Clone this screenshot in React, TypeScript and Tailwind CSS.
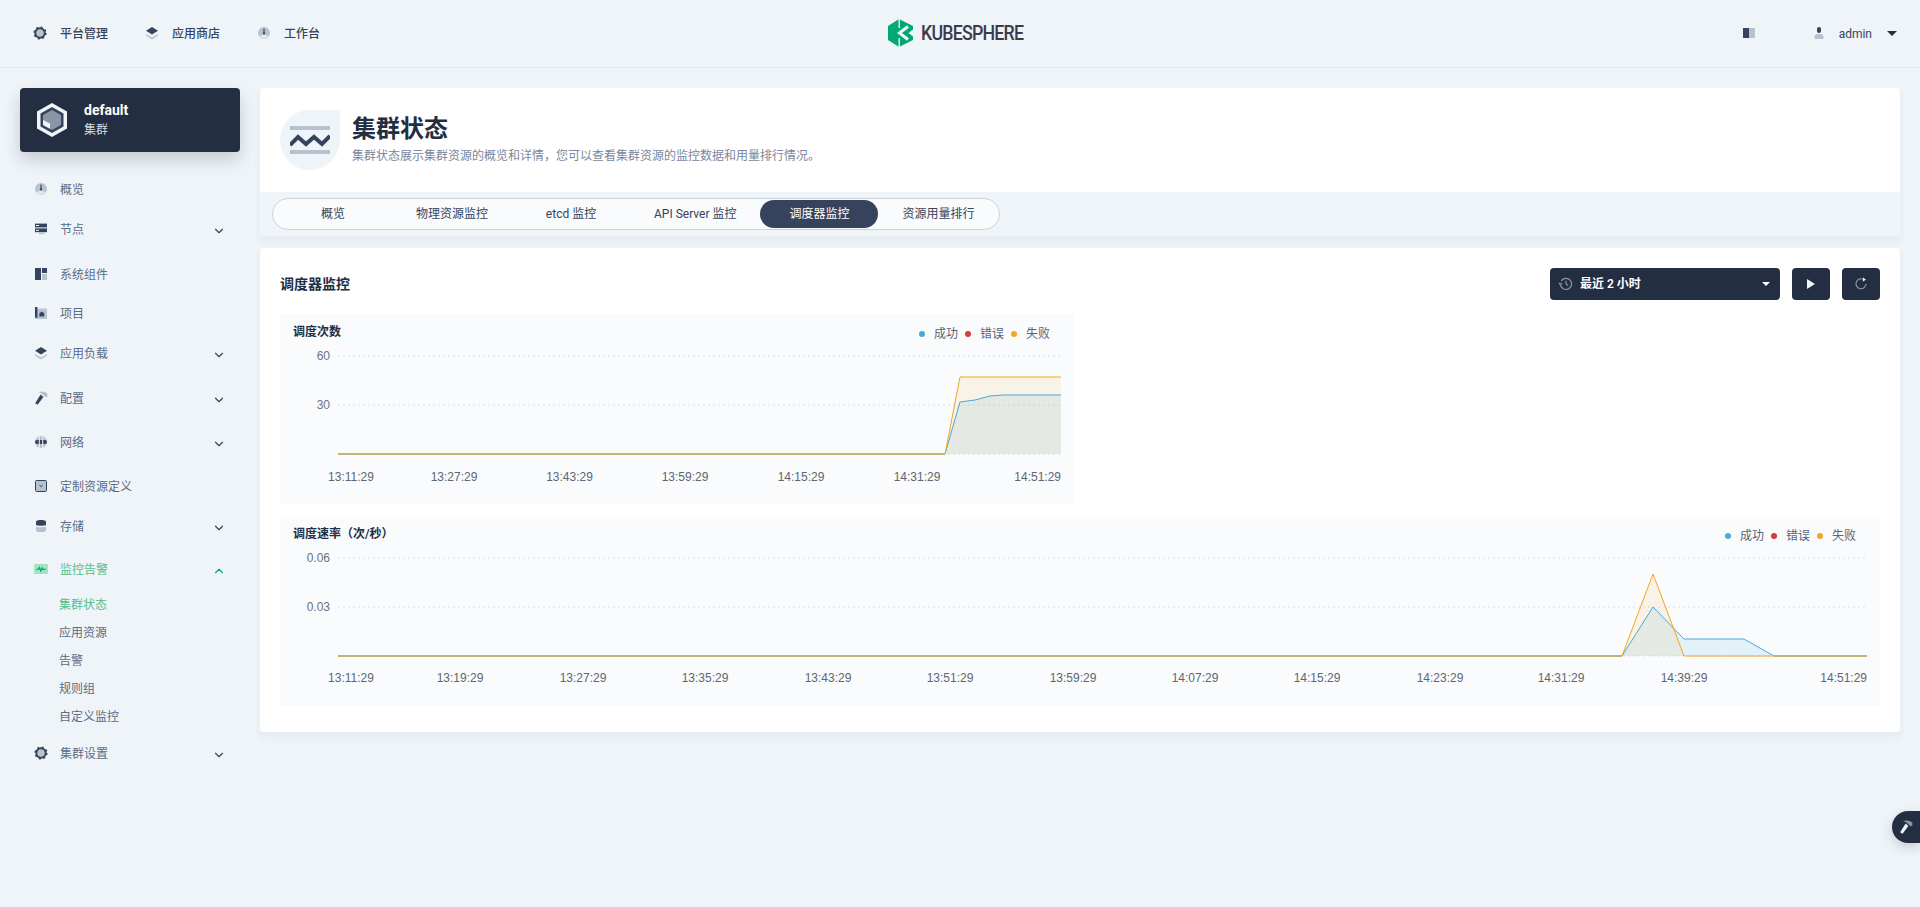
import { ChevronDown, ChevronUp } from "lucide-react";

const DARK = "#36435c";
const LIGHT = "#b6c2cd";

const GearIcon = () => (
  <svg width="16" height="16" viewBox="0 0 16 16" fill="none">
    <circle cx="8" cy="8" r="4.6" stroke={DARK} strokeWidth="2.2" />
    <circle cx="8" cy="8" r="5.8" stroke={DARK} strokeWidth="1.6" strokeDasharray="2 2.55" />
    <circle cx="8" cy="8" r="3.4" fill={LIGHT} />
  </svg>
);

const LayersIcon = () => (
  <svg width="16" height="16" viewBox="0 0 16 16">
    <polygon points="2,9 8,12.5 14,9 14,10.5 8,14.5 2,10.5" fill={LIGHT} />
    <polygon points="8,2 14,5.8 8,9.6 2,5.8" fill={DARK} />
  </svg>
);

const DialIcon = () => (
  <svg width="16" height="16" viewBox="0 0 16 16">
    <circle cx="8" cy="8" r="6" fill={LIGHT} />
    <path d="M3 11.2a6 6 0 0 0 10 0L8 9.5z" fill="#dfe5ec" />
    <rect x="7.4" y="3.6" width="1.2" height="4.6" fill={DARK} />
    <circle cx="8" cy="8.4" r="1.1" fill={DARK} />
  </svg>
);

const NodesIcon = () => (
  <svg width="16" height="16" viewBox="0 0 16 16">
    <rect x="2" y="2.6" width="12" height="3.8" fill={DARK} />
    <rect x="2" y="7.4" width="12" height="3.8" fill={DARK} />
    <rect x="6" y="11.6" width="5" height="1.6" fill={LIGHT} />
    <rect x="3" y="4" width="3" height="1" fill="#eff4f9" />
    <rect x="3" y="8.8" width="3" height="1" fill="#eff4f9" />
  </svg>
);

const ComponentsIcon = () => (
  <svg width="16" height="16" viewBox="0 0 16 16">
    <rect x="2" y="2" width="6" height="12" fill={DARK} />
    <rect x="9" y="2" width="5" height="5" fill={DARK} />
    <rect x="9" y="8" width="5" height="6" fill={LIGHT} />
  </svg>
);

const ProjectIcon = () => (
  <svg width="16" height="16" viewBox="0 0 16 16">
    <rect x="2" y="3.6" width="12" height="10.4" fill={LIGHT} />
    <rect x="2" y="2" width="2.4" height="10.6" fill={DARK} />
    <path d="M6.4 11.6V8.2L8.8 6.4l2.4 1.8v3.4z" fill={DARK} />
  </svg>
);

const HammerIcon = ({ head = LIGHT, handle = DARK }: { head?: string; handle?: string }) => (
  <svg width="16" height="16" viewBox="0 0 16 16">
    <path d="M5.4 2c3.2-1 6.6-.5 8.9 1.6v3.2l-1.8.5-3.2-3.1C8 3.3 6.8 2.6 5.4 2z" fill={head} />
    <path d="M7.6 4.6l2.8 2.4L4.6 14.8l-2.4-1.6z" fill={handle} />
  </svg>
);

const NetworkIcon = () => (
  <svg width="16" height="16" viewBox="0 0 16 16">
    <circle cx="8" cy="8" r="6" fill={LIGHT} />
    <rect x="5.8" y="2" width="1" height="12" fill="#eff4f9" />
    <rect x="9.2" y="2" width="1" height="12" fill="#eff4f9" />
    <rect x="2" y="6" width="12" height="4" rx="2" fill={DARK} />
    <rect x="5.8" y="6" width="1" height="4" fill="#eff4f9" />
    <rect x="9.2" y="6" width="1" height="4" fill="#eff4f9" />
  </svg>
);

const CrdIcon = () => (
  <svg width="16" height="16" viewBox="0 0 16 16" fill="none">
    <rect x="2.5" y="2.5" width="11" height="11" rx="1" fill={LIGHT} stroke={DARK} />
    <path d="M6.4 7.2L8 8.6l1.6-1.4" stroke={DARK} />
  </svg>
);

const DbIcon = () => (
  <svg width="16" height="16" viewBox="0 0 16 16">
    <path d="M3 8.4c1.6 1 8.4 1 10 0v4c0 2-10 2-10 0z" fill={LIGHT} />
    <path d="M3 3.4c0-2 10-2 10 0v3.6c-1.6 1-8.4 1-10 0z" fill={DARK} />
  </svg>
);

const MonitorIcon = () => (
  <svg width="16" height="16" viewBox="0 0 16 16" fill="none">
    <rect x="1" y="3" width="14" height="10" rx="1" fill="#a3e3c4" />
    <path d="M3.4 8.4h2l1-2 1.4 3.6 1.2-3 .8 1.4h3" stroke="#00aa72" strokeWidth="1.2" />
  </svg>
);

const BookIcon = () => (
  <svg width="16" height="16" viewBox="0 0 16 16">
    <rect x="2" y="3" width="6" height="10" fill={DARK} />
    <rect x="8" y="3" width="6" height="10" fill={LIGHT} />
  </svg>
);

const UserIcon = () => (
  <svg width="16" height="16" viewBox="0 0 16 16">
    <rect x="6" y="2" width="4" height="6" rx="2" fill={DARK} />
    <path d="M3.6 14v-2.4C3.6 10 5 9 6.6 9h2.8c1.6 0 3 1 3 2.6V14z" fill={LIGHT} />
  </svg>
);

const Logo = () => (
  <svg width="25" height="28" viewBox="0 0 25 28">
    <polygon points="11,0 25,7 25,21 11,28 0,21 0,7" fill="#00a971" />
    <polyline points="20,7.5 11.5,14 20,20.5" fill="none" stroke="#eff4f9" strokeWidth="3" />
    <polygon points="25,10.5 20.5,14 25,17.5" fill="#eff4f9" />
    <rect x="10.5" y="0" width="1.4" height="9" fill="#eff4f9" />
    <rect x="10.5" y="19" width="1.4" height="9" fill="#eff4f9" />
  </svg>
);

const navItems = [
  { icon: <GearIcon />, label: "平台管理" },
  { icon: <LayersIcon />, label: "应用商店" },
  { icon: <DialIcon />, label: "工作台" },
];

const menu = [
  { icon: <DialIcon />, label: "概览", mt: "mt-[21px]" },
  { icon: <NodesIcon />, label: "节点", mt: "mt-[8px]", arrow: true },
  { icon: <ComponentsIcon />, label: "系统组件", mt: "mt-[13px]" },
  { icon: <ProjectIcon />, label: "项目", mt: "mt-[7px]" },
  { icon: <LayersIcon />, label: "应用负载", mt: "mt-[8px]", arrow: true },
  { icon: <HammerIcon />, label: "配置", mt: "mt-[13px]", arrow: true },
  { icon: <NetworkIcon />, label: "网络", mt: "mt-[12px]", arrow: true },
  { icon: <CrdIcon />, label: "定制资源定义", mt: "mt-[12px]" },
  { icon: <DbIcon />, label: "存储", mt: "mt-[8px]", arrow: true },
];

const subMenu = ["集群状态", "应用资源", "告警", "规则组", "自定义监控"];

const tabs = ["概览", "物理资源监控", "etcd 监控", "API Server 监控", "调度器监控", "资源用量排行"];

function MenuRow({
  icon,
  label,
  mt,
  arrow,
  active,
}: {
  icon: React.ReactNode;
  label: string;
  mt: string;
  arrow?: boolean;
  active?: boolean;
}) {
  return (
    <div className={`h-8 flex items-center pl-[13px] pr-[14px] ${mt}`}>
      <span className="w-4 h-4 mr-[11px]">{icon}</span>
      <span className={`flex-1 mt-[2px] text-xs ${active ? "text-[#55bc8a]" : "text-[#5b6b85]"}`}>{label}</span>
      {arrow &&
        (active ? (
          <ChevronUp size={14} strokeWidth={2} className="mt-[3px] text-[#00aa72]" />
        ) : (
          <ChevronDown size={14} strokeWidth={2} className="mt-[3px] text-[#36435c]" />
        ))}
    </div>
  );
}

function Legend() {
  return (
    <div className="mt-[2px] flex items-center text-xs text-[#5a6478]">
      <span className="w-[6px] h-[6px] rounded-full bg-[#4aa9db] mr-[9px]" />
      <span className="mr-[7px]">成功</span>
      <span className="w-[6px] h-[6px] rounded-full bg-[#d13c3c] mr-[9px]" />
      <span className="mr-[7px]">错误</span>
      <span className="w-[6px] h-[6px] rounded-full bg-[#f5a623] mr-[9px]" />
      <span>失败</span>
    </div>
  );
}

type ChartProps = {
  title: string;
  className: string;
  width: number;
  height: number;
  yLabels: string[];
  ticks: { x: number; label: string; anchor?: "middle" | "end" }[];
  labelY: number;
  right: number;
  blue: string;
  orange: string;
  flats: [number, number][];
};

function Chart({ title, className, width, height, yLabels, ticks, labelY, right, blue, orange, flats }: ChartProps) {
  return (
    <div className={`rounded bg-[#f9fbfd] ${className}`}>
      <div className="h-[30px] pt-[10px] pl-[13px] pr-6 flex justify-between items-start">
        <div className="text-xs leading-4 font-semibold text-[#242e42]">{title}</div>
        <Legend />
      </div>
      <svg width={width} height={height} className="block">
        {[12, 61, 110].map((y) => (
          <line key={y} x1="58" x2={right} y1={y} y2={y} stroke="#e6e9ed" strokeWidth="1.3" strokeDasharray="2 3" />
        ))}
        {yLabels.map((l, i) => (
          <text
            key={l}
            x="50"
            y={12 + i * 49 + 4}
            textAnchor="end"
            fontSize="12"
            fontFamily="'Liberation Sans', sans-serif"
            fill="#6b7280"
          >
            {l}
          </text>
        ))}
        <path d={`${blue} L${right} 110 L58 110 Z`} fill="#4aa9db" fillOpacity="0.12" />
        <path d={`${orange} L${right} 110 L58 110 Z`} fill="#f5a623" fillOpacity="0.1" />
        <path d={blue} fill="none" stroke="#4aa9db" strokeWidth="1" />
        <path d={orange} fill="none" stroke="#f5a623" strokeWidth="1" />
        {flats.map(([a, b]) => (
          <line key={a} x1={a} x2={b} y1="110" y2="110" stroke="#c4b073" strokeWidth="1.6" />
        ))}
        {ticks.map((t) => (
          <text
            key={t.label}
            x={t.x}
            y={labelY}
            textAnchor={t.anchor || "middle"}
            fontSize="12"
            fontFamily="'Liberation Sans', sans-serif"
            fill="#5f6672"
          >
            {t.label}
          </text>
        ))}
      </svg>
    </div>
  );
}

const ticks1 = [
  { x: 71, label: "13:11:29" },
  { x: 174, label: "13:27:29" },
  { x: 289.5, label: "13:43:29" },
  { x: 405, label: "13:59:29" },
  { x: 521, label: "14:15:29" },
  { x: 637, label: "14:31:29" },
  { x: 781, label: "14:51:29", anchor: "end" as const },
];

const ticks2 = [
  { x: 71, label: "13:11:29" },
  { x: 180, label: "13:19:29" },
  { x: 303, label: "13:27:29" },
  { x: 425, label: "13:35:29" },
  { x: 548, label: "13:43:29" },
  { x: 670, label: "13:51:29" },
  { x: 793, label: "13:59:29" },
  { x: 915, label: "14:07:29" },
  { x: 1037, label: "14:15:29" },
  { x: 1160, label: "14:23:29" },
  { x: 1281, label: "14:31:29" },
  { x: 1404, label: "14:39:29" },
  { x: 1587, label: "14:51:29", anchor: "end" as const },
];

export default function App() {
  return (
    <div className="h-[907px] overflow-hidden bg-[#eff4f9] font-['Roboto','Noto_Sans_CJK_SC',sans-serif] text-[#242e42]">
      {/* 顶栏 */}
      <header className="h-[68px] border-b border-[#e3e9ef] flex items-center pl-8 pr-[23px] pb-[1px]">
        <nav className="flex-1 flex gap-9">
          {navItems.map((n) => (
            <div key={n.label} className="flex items-center gap-3 text-xs font-medium text-[#36435c]">
              <span className="w-4 h-4 -mt-[1px]">{n.icon}</span>
              <span className="mt-[1px]">{n.label}</span>
            </div>
          ))}
        </nav>
        <div className="flex items-center gap-2 mr-[19px]">
          <Logo />
          <span className="w-[102px] whitespace-nowrap origin-left scale-x-[0.89] text-[20px] font-medium tracking-[-0.9px] text-[#3d3b4b] leading-none">
            KUBESPHERE
          </span>
        </div>
        <div className="flex-1 flex items-center justify-end">
          <BookIcon />
          <span className="ml-[54px]">
            <UserIcon />
          </span>
          <span className="ml-3 mt-[1px] text-xs text-[#36435c]">admin</span>
          <span className="ml-[15px] w-0 h-0 border-x-[5px] border-x-transparent border-t-[5px] border-t-[#242e42]" />
        </div>
      </header>

      <div className="flex px-5 pt-5 gap-5">
        {/* 侧边栏 */}
        <aside className="w-[220px] shrink-0">
          <div className="h-16 rounded bg-[#242e42] shadow-[0_8px_16px_0_rgba(36,46,66,0.2)] flex items-center pl-[17px]">
            <svg width="30" height="34" viewBox="0 0 30 34">
              <polygon points="15,0 30,8.5 30,25.5 15,34 0,25.5 0,8.5" fill="#eff4f9" />
              <polygon points="15,4 26.5,10.5 26.5,23.5 15,30 3.5,23.5 3.5,10.5" fill="#36435c" />
              <polygon points="15,7 24,12 24,22 15,27 6,22 6,12" fill="#8a95a6" />
              <polygon points="6,17 13,20.5 13,25.8 6,22" fill="#eff4f9" />
            </svg>
            <div className="ml-[17px]">
              <div className="text-sm leading-5 font-bold text-white">default</div>
              <div className="text-xs leading-5 text-[#d5dae2]">集群</div>
            </div>
          </div>

          {menu.map((m) => (
            <MenuRow key={m.label} {...m} />
          ))}
          <MenuRow icon={<MonitorIcon />} label="监控告警" mt="mt-[11px]" arrow active />
          <div className="mt-[6px]">
            {subMenu.map((s, i) => (
              <div
                key={s}
                className={`h-7 leading-7 pl-[39px] text-xs ${i === 0 ? "text-[#55bc8a]" : "text-[#5b6b85]"}`}
              >
                {s}
              </div>
            ))}
          </div>
          <MenuRow icon={<GearIcon />} label="集群设置" mt="mt-[6px]" arrow />
        </aside>

        {/* 主内容 */}
        <main className="flex-1 min-w-0">
          <section className="rounded bg-white shadow-[0_4px_8px_0_rgba(36,46,66,0.06)] overflow-hidden">
            <div className="h-[104px] pt-[22px] pl-5 flex">
              <div className="w-[60px] h-[60px] rounded-full rounded-tr-none bg-[#eff4f9] flex items-center justify-center">
                <svg width="40" height="28" viewBox="0 0 40 28" fill="none">
                  <rect width="40" height="4" fill={LIGHT} />
                  <rect y="24" width="40" height="4" fill={LIGHT} />
                  <path d="M0 19l8-8 8 7 8-7 8 7 8-8" stroke={DARK} strokeWidth="4" />
                </svg>
              </div>
              <div className="ml-3">
                <h1 className="text-2xl leading-8 font-bold text-[#242e42] mt-[3px] mb-[1px]">集群状态</h1>
                <p className="text-xs leading-5 text-[#79879c]">
                  集群状态展示集群资源的概览和详情，您可以查看集群资源的监控数据和用量排行情况。
                </p>
              </div>
            </div>
            <div className="h-11 bg-[#eff4f9] pt-[6px] pl-3">
              <div className="inline-flex h-8 p-[1px] rounded-full border border-[#ccd3db] bg-[#f9fbfd]">
                {tabs.map((t) => (
                  <div
                    key={t}
                    className={`h-7 min-w-[118px] px-6 flex items-center justify-center rounded-full text-xs ${
                      t === "调度器监控" ? "bg-[#36435c] text-white" : "text-[#36435c]"
                    }`}
                  >
                    {t}
                  </div>
                ))}
              </div>
            </div>
          </section>

          <section className="mt-3 h-[484px] rounded bg-white shadow-[0_4px_8px_0_rgba(36,46,66,0.06)] px-5 pt-5">
            <div className="h-8 flex items-center">
              <h2 className="flex-1 text-sm font-semibold text-[#242e42]">调度器监控</h2>
              <div className="w-[230px] h-8 rounded bg-[#242e42] flex items-center pl-2 pr-[10px]">
                <svg width="16" height="16" viewBox="0 0 16 16" fill="none" stroke="#8a95a6" strokeWidth="1.2">
                  <path d="M3.2 5A5.6 5.6 0 1 1 2.4 8" />
                  <path d="M1 7l1.4 1.6L4 7" />
                  <path d="M8 4.8V8l2.2 1.6" />
                </svg>
                <span className="ml-[6px] flex-1 text-xs font-semibold text-white">最近 2 小时</span>
                <span className="w-0 h-0 border-x-[4px] border-x-transparent border-t-[4px] border-t-white" />
              </div>
              <button className="ml-3 w-[38px] h-8 rounded bg-[#242e42] flex items-center justify-center">
                <svg width="10" height="10" viewBox="0 0 10 10">
                  <polygon points="1,0 9,5 1,10" fill="#eff4f9" />
                </svg>
              </button>
              <button className="ml-3 w-[38px] h-8 rounded bg-[#242e42] flex items-center justify-center">
                <svg width="14" height="14" viewBox="0 0 14 14" fill="none" stroke="#8a95a6" strokeWidth="1.2">
                  <path d="M9.8 2.6A5 5 0 1 0 12 7" />
                  <polygon points="9,0.4 12,2.8 8.8,4.4" fill="#eff4f9" stroke="none" />
                </svg>
              </button>
            </div>

            <Chart
              title="调度次数"
              className="mt-[14px] w-[794px] h-[190px]"
              width={794}
              height={160}
              yLabels={["60", "30"]}
              ticks={ticks1}
              labelY={137}
              right={781}
              blue="M58 110 L665 110 L680 58 L695 56 L710 52 L723 51 L781 51"
              orange="M58 110 L665 110 L680 33 L781 33"
              flats={[[58, 665]]}
            />
            <Chart
              title="调度速率（次/秒）"
              className="mt-3 h-[190px]"
              width={1600}
              height={160}
              yLabels={["0.06", "0.03"]}
              ticks={ticks2}
              labelY={136}
              right={1587}
              blue="M58 110 L1342 110 L1373 61 L1404 93 L1464 93 L1494 110 L1587 110"
              orange="M58 110 L1342 110 L1373 28 L1404 110 L1587 110"
              flats={[
                [58, 1342],
                [1494, 1587],
              ]}
            />
          </section>
        </main>
      </div>

      {/* 右下角工具按钮 */}
      <div className="fixed right-0 top-[811px] w-[28px] h-[32px] rounded-l-full bg-[#242e42] shadow-[0_4px_12px_0_rgba(36,46,66,0.2)] flex items-center justify-center">
        <HammerIcon head="#8a95a6" handle="#eff4f9" />
      </div>
    </div>
  );
}
